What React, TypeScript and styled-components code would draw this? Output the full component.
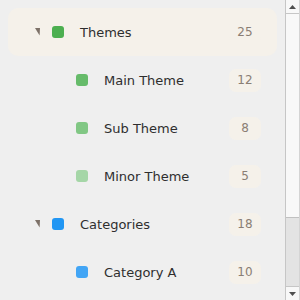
import React from 'react';
import styled, { createGlobalStyle } from 'styled-components';

const GlobalStyle = createGlobalStyle`
  html, body {
    margin: 0;
    background: #efefef;
    font-family: 'DejaVu Sans', sans-serif;
  }
`;

const Panel = styled.div`
  width: 300px;
  height: 300px;
  display: flex;
  background: #efefef;
`;

const Viewport = styled.div`
  flex: 1;
  overflow-y: auto;
  scrollbar-width: none;
  &::-webkit-scrollbar {
    display: none;
  }
`;

const ScrollBar = styled.div`
  width: 15px;
  display: flex;
  flex-direction: column;
  box-sizing: border-box;
  border-left: 1px solid #c6c6c6;
  border-right: 1px solid #d4d4d4;
  background: #e3e3e3;
`;

const ScrollButton = styled.div<{ $down?: boolean }>`
  height: 14px;
  flex-shrink: 0;
  display: flex;
  align-items: center;
  justify-content: center;
  background: #f8f8f8;
  ${(p) => (p.$down ? 'border-top: 1px solid #c6c6c6;' : 'border-bottom: 1px solid #c6c6c6;')}
  box-sizing: border-box;
`;

const Thumb = styled.div`
  height: 204px;
  box-sizing: border-box;
  background: #f8f8f8;
  border-bottom: 1px solid #c0c0c0;
`;

const Track = styled.div`
  flex: 1;
`;

const List = styled.div`
  display: flex;
  flex-direction: column;
  padding: 8px;
`;

const Row = styled.div<{ $level: number; $active?: boolean }>`
  display: flex;
  align-items: center;
  flex-shrink: 0;
  height: 48px;
  padding-left: ${(p) => 27 + p.$level * 24}px;
  padding-right: 16px;
  border-radius: 10px;
  background: ${(p) => (p.$active ? '#f5f1ea' : 'transparent')};
`;

const Caret = styled.div`
  width: 5px;
  height: 8px;
  margin-right: 12px;
  display: flex;
`;

const Swatch = styled.div<{ $color: string }>`
  width: 12px;
  height: 12px;
  border-radius: 3px;
  background: ${(p) => p.$color};
  margin-right: 16px;
`;

const Label = styled.span`
  flex: 1;
  font-size: 13px;
  color: #2e2e2e;
`;

const Count = styled.span`
  min-width: 32px;
  height: 23px;
  box-sizing: border-box;
  padding: 0 8px;
  border-radius: 7px;
  background: #f5f1ea;
  color: #8a7e74;
  font-size: 12px;
  display: flex;
  align-items: center;
  justify-content: center;
`;

type Item = { label: string; color: string; count: number; level: number; open?: boolean; active?: boolean };

const items: Item[] = [
  { label: 'Themes', color: '#4caf50', count: 25, level: 0, open: true, active: true },
  { label: 'Main Theme', color: '#66bb6a', count: 12, level: 1 },
  { label: 'Sub Theme', color: '#81c784', count: 8, level: 1 },
  { label: 'Minor Theme', color: '#a5d6a7', count: 5, level: 1 },
  { label: 'Categories', color: '#2196f3', count: 18, level: 0, open: true },
  { label: 'Category A', color: '#42a5f5', count: 10, level: 1 },
  { label: 'Category B', color: '#64b5f6', count: 5, level: 1 },
  { label: 'Category C', color: '#90caf9', count: 3, level: 1 },
];

export default function App() {
  return (
    <>
      <GlobalStyle />
      <Panel>
        <Viewport>
          <List>
            {items.map((it) => (
              <Row key={it.label} $level={it.level} $active={it.active}>
                <Caret>
                  {it.open && (
                    <svg width="5" height="8" viewBox="0 0 5 8">
                      <polygon points="0,0 5,0 4.6,7.5" fill="#7d7168" />
                    </svg>
                  )}
                </Caret>
                <Swatch $color={it.color} />
                <Label>{it.label}</Label>
                <Count>{it.count}</Count>
              </Row>
            ))}
          </List>
        </Viewport>
        <ScrollBar>
          <ScrollButton>
            <svg width="7" height="4" viewBox="0 0 7 4">
              <polygon points="0,4 3.5,0 7,4" fill="#505050" />
            </svg>
          </ScrollButton>
          <Thumb />
          <Track />
          <ScrollButton $down>
            <svg width="7" height="4" viewBox="0 0 7 4">
              <polygon points="0,0 7,0 3.5,4" fill="#505050" />
            </svg>
          </ScrollButton>
        </ScrollBar>
      </Panel>
    </>
  );
}
